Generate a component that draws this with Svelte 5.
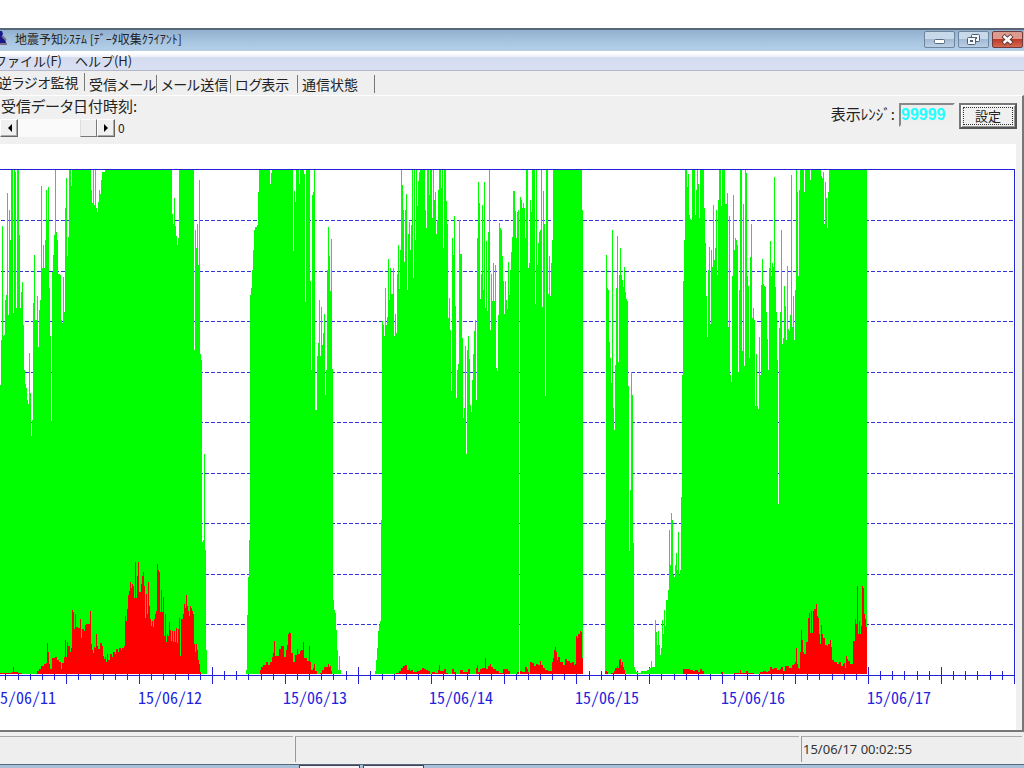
<script lang="ts">
  type Sample = [number, number];

  const PLOT = { top: 26, height: 505, right: 1014 };
  const BASE = PLOT.top + PLOT.height;
  const DAY = 145.8;
  const FIRST_DAY = -6.3;

  let tab = $state(0);
  let range = $state('99999');
  let offset = $state(100);

  const tabs = ['逆ラジオ監視', '受信メール', 'メール送信', 'ログ表示', '通信状態'];
  const days = ['15/06/11', '15/06/12', '15/06/13', '15/06/14', '15/06/15', '15/06/16', '15/06/17'];

  // "x depth" pairs, depth measured down from the top of the plot
  const levels = `
    0 215,1 170,2 56,3 166,4 165,5 130,6 125,7 23,8 145,9 40,10 70,11 0,13 143,14 0,15 2,16 138,17 0,19 65,20 138,21 122,
    22 112,23 155,24 200,25 214,26 218,27 230,28 234,29 183,30 223,31 266,32 250,33 133,34 85,35 150,37 126,38 177,39 140,
    40 130,41 16,42 98,43 75,44 98,45 70,46 20,47 50,48 17,49 118,50 166,51 251,52 102,53 85,54 65,55 0,56 62,57 70,
    58 104,60 105,61 150,62 153,63 107,64 142,65 38,66 8,67 86,68 67,69 0,71 16,72 0,91 20,92 33,93 0,94 35,95 0,96 38,
    97 42,98 32,99 20,100 24,101 10,102 2,105 0,172 44,173 54,174 28,175 56,176 66,177 75,178 68,179 0,194 180,195 60,
    196 78,197 54,198 95,199 10,200 184,201 190,202 372,203 370,204 284,205 380,206 480,207 505,
    246 500,247 445,248 407,249 370,250 125,251 118,252 100,253 80,254 60,255 57,257 55,258 22,259 0,270 14,271 3,272 0,
    293 81,294 21,295 32,296 0,299 14,300 0,304 4,305 132,306 0,310 111,311 200,312 25,313 22,314 0,315 240,317 186,
    318 173,319 130,320 186,321 137,322 175,323 163,324 144,325 225,326 200,327 100,328 57,329 86,330 121,331 69,332 199,
    333 430,334 440,335 443,336 460,337 480,338 500,339 486,340 500,341 505,
    375 501,376 490,377 478,378 461,379 455,380 451,381 350,382 151,383 155,384 166,385 118,386 155,387 147,388 89,389 130,
    390 98,391 124,393 98,394 166,395 144,396 163,397 104,398 75,399 119,400 80,401 0,402 15,403 40,404 92,405 40,406 24,
    407 120,408 64,409 52,410 80,411 55,412 0,413 108,414 0,415 70,416 0,417 36,418 11,419 2,420 0,425 40,426 58,427 0,
    429 25,430 0,432 48,433 0,434 30,435 22,436 64,437 50,438 20,439 0,441 18,442 0,443 78,444 0,446 31,447 54,448 148,
    449 128,450 160,451 221,452 68,453 85,454 46,455 136,456 228,457 200,458 194,459 50,460 84,462 168,463 248,464 238,
    465 176,466 284,467 180,468 166,469 189,470 235,471 242,472 210,473 184,474 161,475 150,476 230,477 68,478 12,479 33,
    480 129,481 104,482 35,483 120,484 12,485 138,486 71,487 141,488 62,489 0,490 160,491 104,492 131,493 93,494 131,
    495 95,496 198,497 201,498 145,499 53,500 58,501 60,502 86,503 111,504 144,505 111,506 130,507 139,508 92,509 125,
    510 100,511 82,512 67,513 21,515 41,516 68,517 42,518 40,519 505,520 27,521 30,522 38,523 33,524 38,525 68,526 0,
    528 98,529 93,530 30,531 42,532 0,535 134,536 0,537 95,538 73,539 62,540 60,541 0,542 137,543 21,544 54,545 226,
    546 0,548 124,549 86,550 126,551 93,552 70,553 0,582 40,583 505,
    605 350,606 85,607 118,608 120,609 172,610 188,611 213,612 60,613 238,614 260,615 195,616 118,617 66,618 192,619 105,
    620 78,621 105,622 110,623 117,624 97,625 122,626 129,627 131,628 216,629 381,630 320,631 202,632 225,633 373,634 497,
    635 500,636 502,638 503,641 501,647 500,649 498,651 491,652 497,655 450,656 462,657 475,658 461,659 475,660 485,
    661 478,662 450,663 464,664 440,665 456,666 430,668 420,669 360,670 395,671 343,672 350,673 405,674 407,675 395,
    676 383,677 400,678 362,679 405,680 400,681 327,682 205,683 111,684 70,685 0,687 17,688 4,689 45,690 49,691 50,692 0,
    695 45,696 20,697 0,698 14,699 48,700 0,704 38,705 73,706 126,707 167,708 100,709 77,710 154,711 80,712 97,713 35,
    714 90,715 78,716 40,717 105,718 30,719 0,721 36,722 0,725 34,726 34,727 23,728 157,729 46,730 205,731 212,732 106,
    733 25,734 80,735 68,736 70,737 75,738 202,739 120,740 0,742 181,743 34,744 196,745 0,746 3,747 106,748 116,749 188,
    750 87,751 54,752 148,753 138,754 150,755 236,756 184,757 236,758 239,759 167,760 205,761 115,762 89,763 114,764 116,
    765 117,766 142,767 169,768 200,769 98,770 71,771 106,772 93,773 97,774 7,775 117,776 142,777 190,778 334,779 158,
    780 142,781 60,782 174,783 168,784 116,785 136,786 170,787 96,788 159,789 161,790 145,791 5,792 157,793 126,794 170,
    795 120,796 0,797 22,798 106,799 20,800 0,804 22,805 0,810 10,811 0,821 6,822 8,823 2,824 54,825 12,826 28,827 58,
    828 22,829 0,867 505`;

  // "x height" pairs, height measured up from the time axis
  const alerts = `
    0 1,12 2,13 7,14 2,18 1,22 0,37 3,39 5,41 8,44 10,46 11,47 31,48 22,49 10,50 5,52 16,55 17,57 14,59 12,61 5,62 11,
    64 17,65 34,66 17,67 32,68 28,70 22,71 26,72 64,73 62,74 45,75 60,76 47,78 46,80 55,81 36,82 45,84 43,85 49,86 50,
    90 63,91 30,92 24,93 21,94 27,95 26,96 40,97 28,98 25,100 31,102 28,103 18,104 15,105 17,106 12,107 20,108 14,110 20,
    112 17,113 22,115 20,116 25,118 22,119 26,121 24,122 26,124 28,125 58,126 53,127 65,128 79,129 83,130 92,131 86,
    132 90,133 88,134 76,135 112,136 76,137 98,138 112,139 82,141 90,142 98,143 102,144 88,145 56,146 80,147 60,148 92,
    149 68,150 55,151 48,152 53,153 47,154 55,155 60,156 63,157 110,158 104,159 102,160 62,161 84,162 62,163 77,164 38,
    165 60,166 32,167 40,168 38,169 52,170 44,171 33,172 43,173 32,174 43,175 32,176 46,177 31,178 45,179 56,180 18,
    181 55,183 60,184 70,185 66,186 79,187 68,188 63,189 58,190 68,191 66,192 63,193 60,194 30,195 22,196 30,197 24,
    198 14,199 10,200 2,201 0,260 4,261 7,263 9,266 12,268 9,270 12,272 17,273 21,274 33,275 18,279 25,281 28,284 17,
    286 24,287 29,288 40,289 42,290 41,291 21,293 12,295 19,297 25,298 20,300 23,301 24,303 32,304 16,307 13,309 28,
    310 12,311 4,313 6,314 10,315 3,317 0,320 1,322 4,324 7,328 10,329 7,330 8,331 3,332 0,396 1,399 3,401 6,403 8,
    405 9,407 4,409 6,410 3,411 4,413 2,417 3,420 4,422 6,424 5,426 4,428 3,430 0,432 2,435 1,438 4,439 9,440 3,444 5,
    446 1,448 0,452 5,454 2,456 0,460 4,463 2,468 5,470 0,476 6,477 9,478 2,480 5,482 6,485 16,486 5,488 8,490 10,
    491 7,493 5,496 3,499 1,503 5,508 3,510 0,517 2,519 0,520 3,522 2,525 7,527 5,528 2,529 0,530 12,532 11,534 8,536 10,
    538 9,540 13,541 9,543 6,545 4,548 3,552 12,553 16,554 24,555 27,556 22,557 14,558 17,560 12,563 9,565 15,567 13,
    570 11,572 12,574 9,575 10,576 38,577 36,578 40,580 43,581 42,582 16,583 0,605 3,607 2,608 0,611 1,614 3,615 6,617 8,
    618 6,619 14,620 15,621 9,622 12,623 7,624 4,625 0,683 5,690 4,693 3,695 4,698 2,700 5,702 3,704 0,721 2,723 0,
    734 1,740 4,741 1,746 3,748 1,754 0,760 2,763 3,766 2,768 3,770 7,772 5,774 6,777 4,780 5,781 7,783 3,785 8,789 6,
    792 9,794 10,795 12,796 26,797 10,798 6,799 5,800 22,801 44,802 34,803 22,804 20,806 32,808 56,809 61,810 41,811 63,
    812 41,813 63,814 65,816 70,817 58,818 56,819 40,820 30,821 49,822 40,823 36,825 29,827 28,828 30,830 34,831 27,
    832 14,834 12,837 10,839 12,841 8,843 10,844 11,845 6,846 18,847 15,848 13,850 10,853 33,855 55,856 50,857 88,858 40,
    859 53,860 40,861 48,862 88,863 86,864 60,865 55,866 47,867 0`;

  function parse(text: string): Sample[] {
    return text.split(',').map((pair) => pair.trim().split(' ').map(Number) as Sample);
  }

  function stepPath(samples: Sample[], toY: (v: number) => number): string {
    const floor = BASE - 1;
    let d = `M0 ${floor}`;
    for (const [x, v] of samples) {
      d += `H${x}V${Math.min(toY(v), floor)}`;
    }
    return `${d}V${floor}Z`;
  }

  const levelPath = stepPath(parse(levels), (v) => PLOT.top + v);
  const alertPath = stepPath(parse(alerts), (v) => BASE - 1 - v);

  const gridLines = Array.from({ length: 9 }, (_, i) => Math.round(PLOT.top - 0.5 + (i + 1) * 50.5));
  const ticks = Array.from({ length: 84 }, (_, i) => ({
    x: Math.floor(FIRST_DAY + ((i + 1) * DAY) / 12),
    long: (i + 1) % 6 === 0,
  }));
</script>

<div class="desktop">
  <div class="window">
    <header class="title-bar">
      <svg class="app-icon" width="8" height="16" viewBox="0 0 8 16" aria-hidden="true">
        <path d="M0 1h2l1 3-1 2 3 3 1 4H0z" fill="#17178c" />
        <path d="M2 6l4 4M0 14h7" stroke="#7d6f8b" stroke-width="2" />
      </svg>
      <h1>地震予知ｼｽﾃﾑ [ﾃﾞｰﾀ収集ｸﾗｲｱﾝﾄ]</h1>
      <div class="window-buttons">
        <button type="button" aria-label="最小化">
          <svg width="13" height="12" viewBox="0 0 13 12">
            <rect x="1.5" y="5.5" width="10" height="4" rx="1" fill="#fff" stroke="#5b6b7d" />
          </svg>
        </button>
        <button type="button" aria-label="元に戻す">
          <svg width="13" height="12" viewBox="0 0 13 12" fill="#f4f8fc" stroke="#4f5f72">
            <rect x="4.5" y="0.5" width="8" height="7" rx="1" />
            <rect x="7.5" y="3.5" width="2" height="1" fill="#9db4cd" />
            <rect x="0.5" y="3.5" width="8" height="7" rx="1" />
            <rect x="3.5" y="6.5" width="2" height="1" fill="#9db4cd" />
          </svg>
        </button>
        <button type="button" class="close" aria-label="閉じる">
          <svg width="13" height="12" viewBox="0 0 13 12">
            <path d="M2 1.5l9 8M11 1.5l-9 8" stroke="#5f3437" stroke-width="4.4" />
            <path d="M2.6 2l7.8 7M10.4 2l-7.8 7" stroke="#fff" stroke-width="2.6" />
          </svg>
        </button>
      </div>
    </header>

    <nav class="menu-bar">
      <button type="button">ファイル(F)</button>
      <button type="button">ヘルプ(H)</button>
    </nav>

    <div class="tab-strip" role="tablist">
      {#each tabs as name, i}
        <button type="button" role="tab" aria-selected={tab === i} class:active={tab === i} onclick={() => (tab = i)}>
          {name}
        </button>
      {/each}
    </div>

    <main class="page">
      <div class="toolbar">
        <div class="history">
          <label for="history">受信データ日付時刻:</label>
          <div class="scroll-row">
            <div class="scrollbar">
              <button type="button" aria-label="前へ" onclick={() => (offset -= 10)}>
                <svg width="5" height="8" viewBox="0 0 5 8"><path d="M5 0v8L1 4z" /></svg>
              </button>
              <input id="history" type="range" min="0" max="100" bind:value={offset} />
              <button type="button" aria-label="次へ" onclick={() => (offset += 10)}>
                <svg width="5" height="8" viewBox="0 0 5 8"><path d="M0 0v8l4-4z" /></svg>
              </button>
            </div>
            <output for="history">0</output>
          </div>
        </div>
        <form class="range" onsubmit={(e) => e.preventDefault()}>
          <label for="range">表示ﾚﾝｼﾞ:</label>
          <input id="range" type="text" bind:value={range} />
          <button type="submit"><span>設定</span></button>
        </form>
      </div>

      <div class="chart">
        <svg viewBox="0 0 1016 586" shape-rendering="crispEdges">
          <g class="grid">
            {#each gridLines as y}
              <line x1="1" x2={PLOT.right} y1={y + 0.5} y2={y + 0.5} />
            {/each}
          </g>
          <g class="axis">
            <path d="M0 {PLOT.top - 0.5}H{PLOT.right + 0.5}V{BASE + 8}" />
            {#each ticks as t}
              <path d="M{t.x + 0.5} {BASE - (t.long ? 8 : 4)}V{BASE + (t.long ? 9 : 5)}" />
            {/each}
          </g>
          <path class="level" d={levelPath} />
          <path class="alert" d={alertPath} />
          <path class="axis" d="M0 {BASE + 0.5}H{PLOT.right}" />
          {#each days as day, i}
            <text x={Math.round(FIRST_DAY + i * DAY) - 2} y={BASE + 29}>{day}</text>
          {/each}
        </svg>
      </div>
    </main>

    <footer class="status-bar">
      <div></div>
      <div></div>
      <div>15/06/17 00:02:55</div>
    </footer>
  </div>
  <div class="taskbar"><span></span><span></span></div>
</div>

<style>
  :global(body) {
    background: #fff;
    overflow: hidden;
  }

  .desktop {
    padding-top: 28px;
    font-family: 'Noto Sans CJK JP', sans-serif;
    font-size: 15px;
    color: #222;
  }

  .window {
    background: #efefef;
  }

  button,
  input {
    box-sizing: border-box;
    margin: 0;
    padding: 0;
    font: inherit;
    color: inherit;
    border: 0;
    border-radius: 0;
    background: none;
  }

  .title-bar {
    display: flex;
    align-items: flex-start;
    box-sizing: border-box;
    height: 23px;
    border-top: 2px solid #566878;
    background: linear-gradient(#92b0ce, #a9c6e2 60%, #b5cfe8);
  }

  .app-icon {
    flex: none;
  }

  h1 {
    flex: 1;
    margin: 0 0 0 7px;
    font-size: 12px;
    font-weight: 400;
    line-height: 18px;
  }

  .window-buttons {
    display: flex;
    gap: 3px;
    padding: 1px 1px 0 0;
  }

  .window-buttons button {
    display: grid;
    place-items: center;
    width: 31px;
    height: 17px;
    border: 1px solid #6f859e;
    border-radius: 2px;
    background: linear-gradient(#c8d9ea 45%, #a2bad4 50%, #b9cfe4);
  }

  .window-buttons .close {
    border-color: #713a3c;
    background: linear-gradient(#dc9b8c 45%, #bd3b28 50%, #d4694f);
  }

  .menu-bar {
    display: flex;
    gap: 13px;
    box-sizing: border-box;
    height: 20px;
    border-bottom: 1px solid #b4b9c9;
    background: linear-gradient(#fff 10%, #edf0f9 30%, #d4dcf0 35%, #d9e0f3);
    font-size: 13px;
    line-height: 19px;
  }

  .menu-bar button:first-child {
    margin-left: -6px;
  }

  .tab-strip {
    display: grid;
    grid-template-columns: 85px 72px 74px 67px 77px;
    height: 24px;
  }

  .tab-strip button {
    padding-left: 4px;
    margin: 4px 0 2px;
    border-right: 1px solid #777;
    font-size: 14px;
    font-feature-settings: 'palt';
    line-height: 18px;
    text-align: left;
    white-space: nowrap;
  }

  .tab-strip .active {
    padding-left: 0;
    margin: 2px 0 4px -2px;
  }

  .page {
    border-top: 1px solid #fff;
    border-right: 2px solid #777;
    border-bottom: 2px solid #777;
    background: #f0f0f0;
  }

  .toolbar {
    display: flex;
    justify-content: space-between;
    align-items: flex-start;
    box-sizing: border-box;
    height: 48px;
    padding-right: 5px;
  }

  .history label {
    display: block;
    height: 22px;
    padding-left: 1px;
    line-height: 20px;
    font-feature-settings: 'palt';
  }

  .scroll-row {
    display: flex;
    align-items: center;
    gap: 3px;
    height: 20px;
    font-size: 12px;
    line-height: 16px;
  }

  .scrollbar {
    display: grid;
    grid-template-columns: 18px 79px 18px;
    height: 18px;
  }

  .scrollbar button {
    display: grid;
    place-items: center;
    border: 1px solid;
    border-color: #fff #666 #666 #fff;
    background: #f0f0f0;
    box-shadow: inset -1px -1px #aaa;
  }

  .scrollbar input {
    width: 100%;
    height: 18px;
    appearance: none;
    background: #fafafa;
  }

  .scrollbar input::-webkit-slider-thumb {
    appearance: none;
    width: 17px;
    height: 18px;
    border: 1px solid;
    border-color: #fff #777 #777 #ddd;
    background: #efefef;
  }

  .range {
    display: flex;
    align-items: flex-start;
    gap: 4px;
    padding-top: 7px;
  }

  .range label {
    line-height: 22px;
  }

  .range input {
    width: 56px;
    height: 24px;
    border: 2px solid;
    border-color: #888 #f0f0f0 #f0f0f0 #888;
    background: #eee;
    color: #2ff;
    font: bold 16px 'Liberation Sans', sans-serif;
  }

  .range button {
    width: 58px;
    height: 26px;
    padding: 2px;
    border: 2px solid;
    border-color: #777 #555 #555 #777;
    background: #f0f0f0;
    box-shadow: inset 1px 1px #fff, inset -1px -1px #999;
    font-size: 13px;
    line-height: 16px;
  }

  .range button span {
    display: block;
    border: 1px dotted #333;
  }

  .chart {
    margin-right: 6px;
    background: #fff;
  }

  .chart svg {
    display: block;
    width: 100%;
  }

  .grid line {
    stroke: #33d;
    stroke-dasharray: 4 2;
  }

  .axis {
    fill: none;
    stroke: #22d;
  }

  .level {
    fill: #0f0;
  }

  .alert {
    fill: #f00;
  }

  .chart text {
    fill: #22d;
    font-size: 16px;
    font-feature-settings: 'hwid';
  }

  .status-bar {
    display: grid;
    grid-template-columns: 293px 1fr 221px;
    gap: 2px;
    padding: 4px 2px 2px 0;
    font: 13px/25px 'Noto Sans', sans-serif;
    color: #333;
  }

  .status-bar div {
    height: 25px;
    padding-left: 1px;
    border-top: 1px solid #aaa;
    border-left: 1px solid #999;
    background: #eee;
  }

  .status-bar div:first-child {
    border-left: 0;
  }

  .taskbar {
    display: flex;
    gap: 3px;
    height: 3px;
    padding-left: 299px;
    border-top: 1px solid #56697c;
    background: #a9c0d9;
  }

  .taskbar span {
    width: 59px;
    border: 1px solid #445;
    border-bottom: 0;
    background: #f4f4f8;
  }
</style>
